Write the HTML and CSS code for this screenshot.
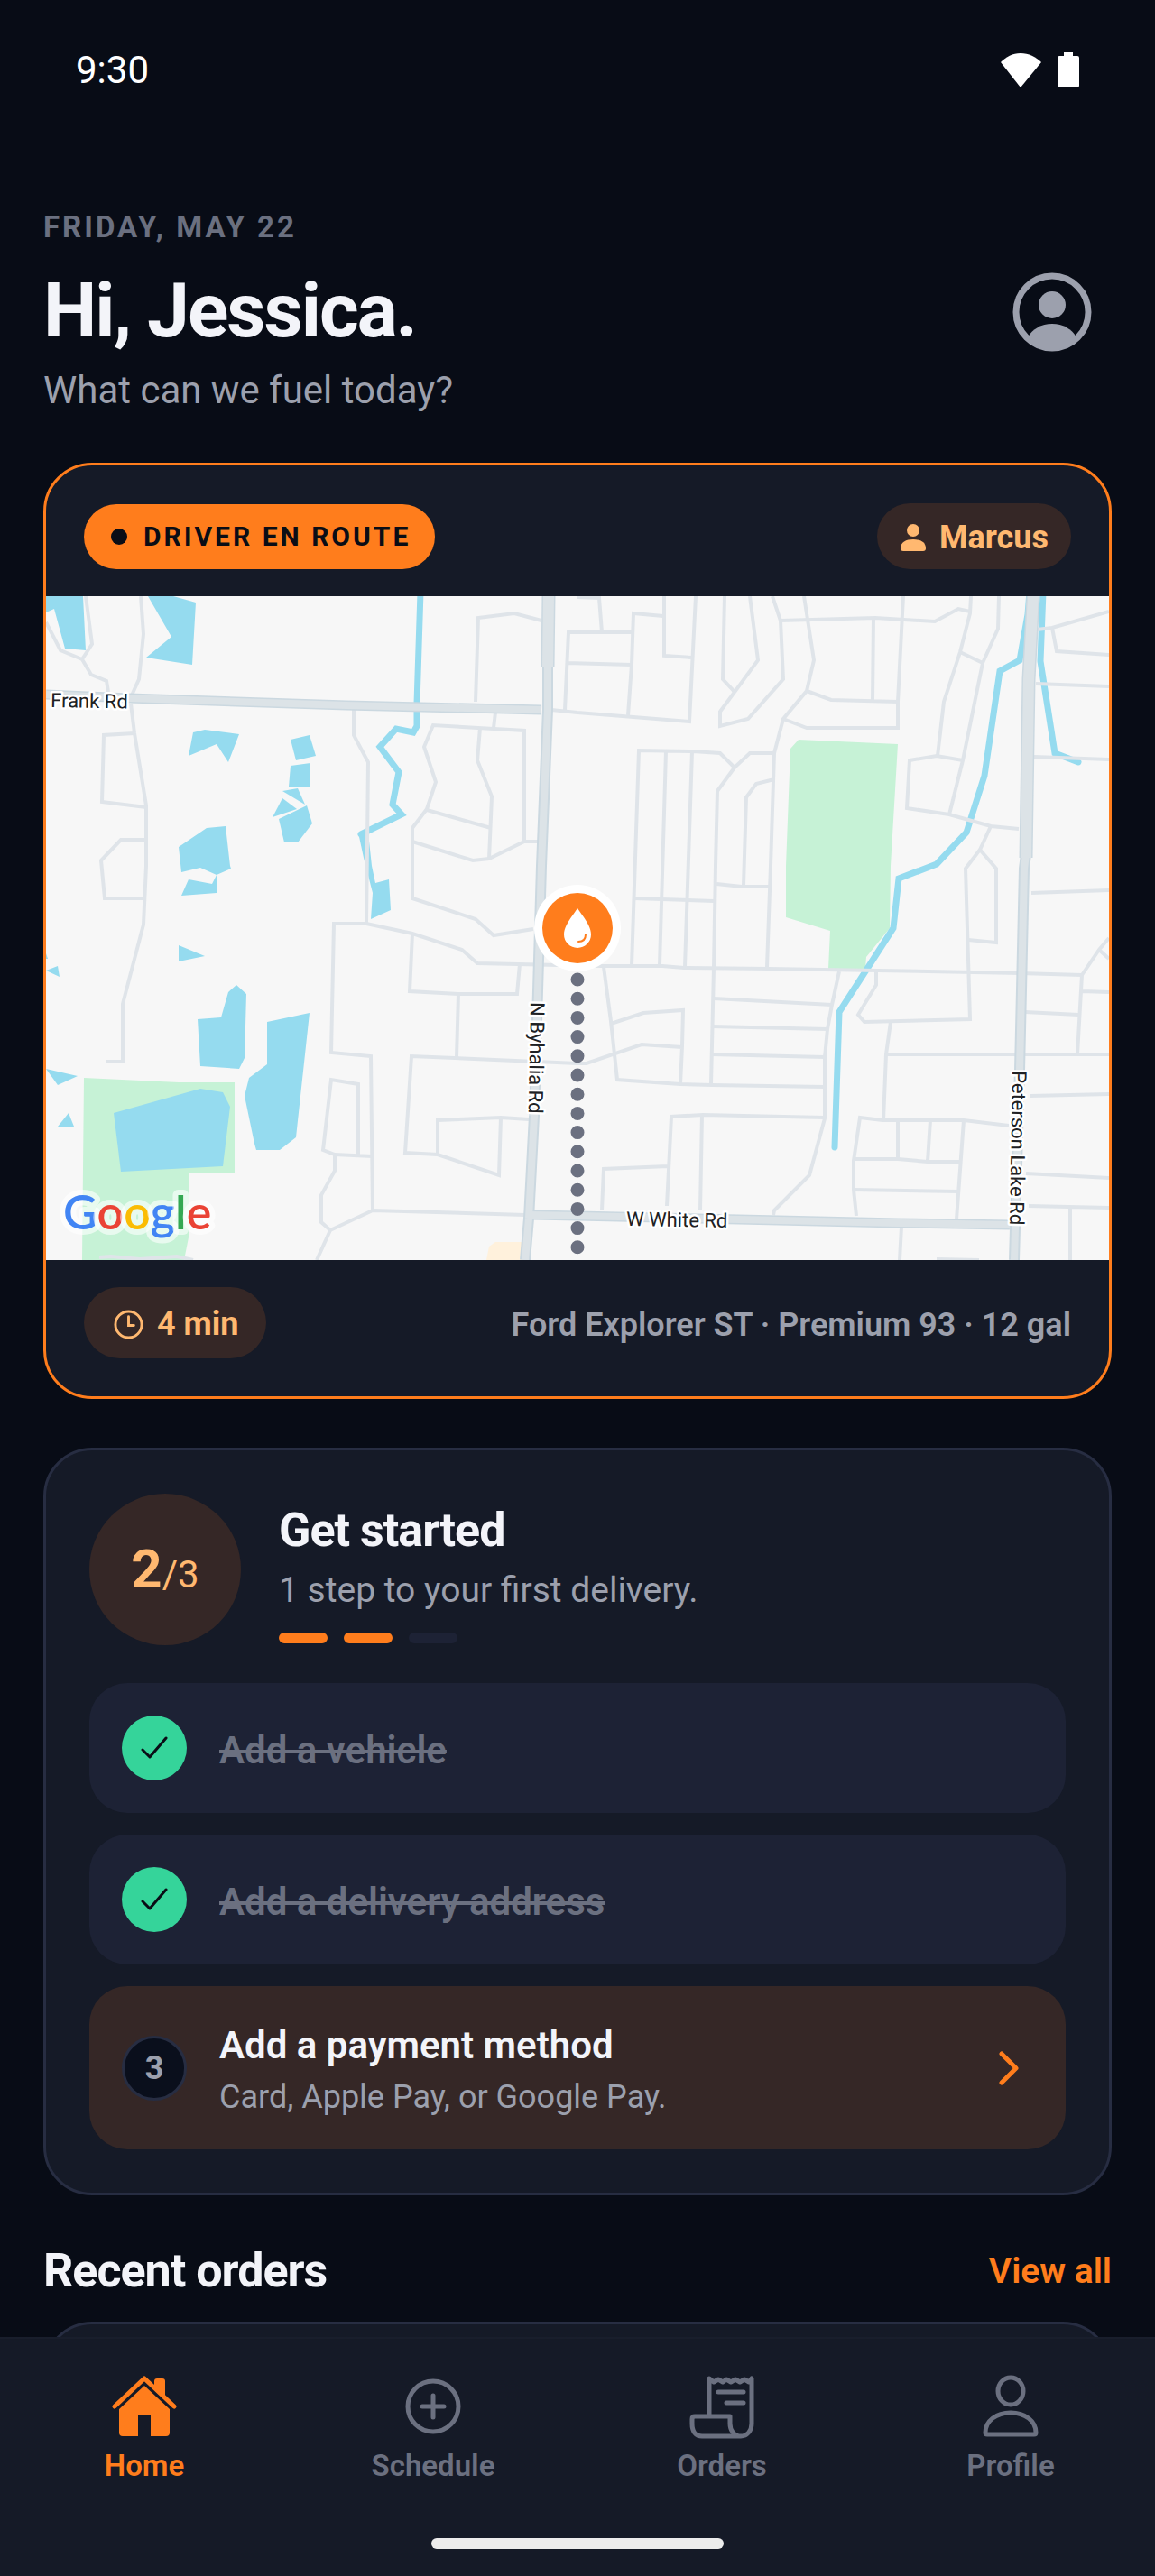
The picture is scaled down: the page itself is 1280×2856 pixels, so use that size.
FILE: index.html
```html
<!DOCTYPE html>
<html lang="en">
<head>
  <meta charset="UTF-8">
  <meta name="viewport" content="width=device-width, initial-scale=1">
  <title>Home</title>
  <link rel="stylesheet" href="styles.css">
</head>
<body>
  <div class="status-bar">
    <span>9:30</span>
    <div class="status-icons">
      <svg width="45" height="38" viewBox="0 0 45 38" fill="#fff"><path d="M22 38L0 10C6 4 13 0 22 0s17 4 23 10z"/></svg>
      <svg width="24" height="39" viewBox="0 0 24 39" fill="#fff"><path d="M7 4V0h10v4h5q2 0 2 2v31q0 2-2 2H2q-2 0-2-2V6q0-2 2-2z"/></svg>
    </div>
  </div>

  <main class="content">
    <header class="greeting">
      <div>
        <p class="date">FRIDAY, MAY 22</p>
        <h1>Hi, Jessica.</h1>
        <p class="subtitle">What can we fuel today?</p>
      </div>
      <button class="avatar" aria-label="Account">
        <svg width="88" height="88" viewBox="0 0 88 88">
          <defs><clipPath id="avatarClip"><circle cx="44" cy="44" r="42"/></clipPath></defs>
          <circle cx="44" cy="44" r="40" fill="none" stroke="#9ca0ad" stroke-width="7"/>
          <g fill="#9ca0ad" clip-path="url(#avatarClip)">
            <circle cx="44" cy="36" r="15"/>
            <path d="M17 72C22 63 32 57 44 57s22 6 27 15L62 88H26z"/>
          </g>
        </svg>
      </button>
    </header>

    <!-- Active delivery -->
    <section class="card delivery">
      <div class="delivery-top">
        <span class="badge"><span class="badge-dot"></span>DRIVER EN ROUTE</span>
        <span class="chip driver">
          <svg width="28" height="30" viewBox="0 0 28 30" fill="#ffb870"><circle cx="14" cy="7" r="7"/><path d="M0 27C0 20 6 17 14 17s14 3 14 10q0 3-3 3H3q-3 0-3-3z"/></svg>
          Marcus
        </span>
      </div>

      <svg class="map" viewBox="0 0 1178 736" role="img" aria-label="Driver location map">
        <rect width="1178" height="736" fill="#f7f7f7"/>
        <!-- parks -->
        <g fill="#c6f2d6">
          <path d="M42 534L147 539 209 539 209 640 158 640 159 706 153 736 40 736z"/>
          <path d="M834 159L944 164 936 299 935 368 909 400 908 413 867 413 869 371 820 356 820 299 825 169z"/>
        </g>
        <path d="M488 736L491 721 498 716 528 716 527 736z" fill="#fff1dc"/>
        <!-- water -->
        <g fill="#95dbef">
          <path d="M0 0H41L44 60 21 58 9 14 0 18z"/>
          <path d="M113 0H141L166 7 162 76 111 68 139 45z"/>
          <path d="M346 262L357 262 361 299 365 318 380 314 382 348 360 358 362 329 352 290z"/>
          <path d="M163 151L176 148 214 153 202 184 189 164 158 177z"/>
          <path d="M271 159L292 154 299 177 277 182z"/>
          <path d="M271 188L293 185 293 211 269 211z"/>
          <path d="M262 216L279 213 287 231z"/>
          <path d="M262 224L278 236 251 245z"/>
          <path d="M258 247L289 232 295 252 279 273 264 273z"/>
          <path d="M147 278L178 257 199 255 204 299 205 302 189 309 171 301 150 306z"/>
          <path d="M158 314L184 319 189 309 189 329 150 332z"/>
          <path d="M147 387L176 399 147 405z"/>
          <path d="M0 396L2 402H0z"/>
          <path d="M0 415L13 410 15 422z"/>
          <path d="M0 524L35 532 13 542z"/>
          <path d="M25 573L31 588H13z"/>
          <path d="M211 431L222 441 220 512 214 524 171 521 168 469 194 467 202 439z"/>
          <path d="M245 472L292 462 277 600 259 614 233 614 231 607 220 554 225 534 245 519z"/>
          <path d="M75 573L171 546 196 550 204 566 196 632 83 638z"/>
        </g>
        <g fill="none" stroke="#95dbef" stroke-width="7" stroke-linecap="round">
          <path d="M415 -5L411 119 411 144 407 151 388 147 370 167 391 195 384 231 394 242 349 264"/>
          <path d="M1090 -5L1088 20 1079 71 1057 83 1040 199 1020 262 987 297 945 313 939 368 879 461 874 611"/>
          <path d="M1105 -5L1102 72 1118 174 1144 184"/>
        </g>
        <!-- side streets -->
        <g fill="none" stroke="#dfe4e9" stroke-width="4">
          <path d="M0 29L16 60 40 70 50 87 67 94 69 106M40 70L51 53 44 0M105 0L108 42 103 92 94 112"/>
          <path d="M94 119L98 152 111 232 111 299 108 364 85 452 85 516 66 516"/>
          <path d="M98 152L64 154 62 228 111 234M111 270L83 270 61 293 65 335 108 335"/>
          <path d="M341 126L341 154 357 184 355 363M476 117L479 24 519 19 549 27M498 129L496 146"/>
          <path d="M530 272L530 149 429 143 419 167 432 206 422 236 406 257 406 335 476 358 496 376 540 369"/>
          <path d="M481 146L478 182 494 222 491 291M422 237L493 257M406 272L473 293 491 291 530 272 545 272"/>
          <path d="M355 363L319 363 316 506 360 510 362 681M355 363L406 374 461 392 478 407 613 410"/>
          <path d="M406 374L403 438 457 441 522 441 525 408M457 441L455 511"/>
          <path d="M589 518L405 510 398 617 434 619 502 642 504 578M434 619L434 581 504 578 535 580"/>
          <path d="M346 619L346 541 316 536 307 614 320 619 362 621"/>
          <path d="M320 619L320 637 305 664 305 694 315 703 362 681 531 686M315 703L300 736"/>
          <path d="M59 733L72 732 104 735 145 732 163 736"/>
          <path d="M589 1L613 2 616 40M575 126L579 40 649 40M577 74L649 76M560 126L589 129 713 139 720 0"/>
          <path d="M684 22L651 19 649 76 645 132M685 0L685 66 715 68M752 0L750 92 763 106"/>
          <path d="M780 0L789 71 747 128 747 144 778 136 817 92 814 27 805 0"/>
          <path d="M840 0L851 71 843 105 817 136 807 174 803 299 799 411"/>
          <path d="M814 27L919 24 985 28 1011 14 1024 17M950 0L944 117 944 146 843 146 817 136"/>
          <path d="M843 105L870 115 944 117M917 24L916 116"/>
          <path d="M1025 0L1024 19 1013 62 995 117 988 177M1056 0L1055 36 1038 74 1016 182 1001 242M1013 62L1038 74"/>
          <path d="M1016 182L987 177 957 182 954 235 1001 242 1047 255 1078 258"/>
          <path d="M1047 255L1035 281 1019 302 1024 469 907 472 900 464 920 431 920 415"/>
          <path d="M1035 281L1053 302 1053 384 1022 381"/>
          <path d="M1178 17L1115 35 1098 37M1115 35L1120 61 1178 65M1097 97L1178 100M1095 178L1178 181"/>
          <path d="M649 410L657 171 717 172 747 174 763 190 780 174 807 174M687 172L680 409M716 172L708 411"/>
          <path d="M763 190L744 216 742 299 740 412 737 541M807 203L787 208 776 223 773 321"/>
          <path d="M652 335L740 338M743 319L771 322 801 322"/>
          <path d="M613 410L683 410 707 412 801 413 922 415 1079 418 1148 420"/>
          <path d="M1148 420L1167 392 1178 379M1167 392L1178 402M1148 420L1143 508M1148 438L1178 439M1085 461L1144 464M931 508L1178 508"/>
          <path d="M936 472L931 508 928 581M879 416L871 453 866 480 863 511 863 579 846 642 807 681 806 686"/>
          <path d="M740 446L871 453M738 477L866 480M738 508L863 511"/>
          <path d="M618 411L626 471 633 536 703 541 738 542 863 544"/>
          <path d="M626 474L662 462 706 459 705 499 703 541M589 518L599 518 660 497 705 500"/>
          <path d="M863 578L728 575 693 577 688 676M727 575L725 681M689 632L618 635 616 681"/>
          <path d="M1067 587L1017 581 927 581 902 578 895 626 895 658 898 687"/>
          <path d="M944 581L944 624M980 581L977 627M895 624L944 624 977 627 1013 627M1017 581L1009 691M895 658L1011 660"/>
          <path d="M1092 329L1178 326M1091 554L1178 552M1086 640L1178 645M1089 676L1178 678M1135 678L1135 736M948 699L946 736M987 735L1034 736"/>
        </g>
        <!-- main roads: edge, then fill -->
        <g fill="none" stroke="#cbd8e0">
          <path stroke-width="11" d="M0 109L92 113 333 121 549 126M540 686L589 687 768 691 944 695 1068 697"/>
          <path stroke-width="15" d="M557 0L556 78M1094 0L1089 92 1086 290"/>
          <path stroke-width="12" d="M556 76L556 126 549 299 541 576 535 690 531 736M1086 286L1084 302 1079 526 1073 736"/>
        </g>
        <g fill="none" stroke="#dce3e7">
          <path stroke-width="8" d="M0 109L92 113 333 121 549 126M536 686L589 687 768 691 944 695 1068 697"/>
          <path stroke-width="12" d="M557 0L556 78M1094 0L1089 92 1086 290"/>
          <path stroke-width="8" d="M556 76L556 126 549 299 541 576 535 690 531 736M1086 286L1084 302 1079 526 1073 736"/>
        </g>
        <g class="street-names">
          <text transform="translate(5 123) rotate(1)">Frank Rd</text>
          <text transform="translate(643 698) rotate(1)">W White Rd</text>
          <text transform="translate(537 450) rotate(91)">N Byhalia Rd</text>
          <text transform="translate(1071 526) rotate(91)">Peterson Lake Rd</text>
        </g>
        <text class="google" x="19" y="702"><tspan fill="#4285f4">G</tspan><tspan fill="#ea4335">o</tspan><tspan fill="#fbbc04">o</tspan><tspan fill="#4285f4">g</tspan><tspan fill="#34a853">l</tspan><tspan fill="#ea4335">e</tspan></text>
        <!-- route and driver pin -->
        <path d="M589 425V740" stroke="#6b7080" stroke-width="15" stroke-linecap="round" stroke-dasharray="0 21.2"/>
        <circle cx="589" cy="368" r="48" fill="#fff"/>
        <circle cx="589" cy="368" r="39" fill="#ff7d1c"/>
        <path d="M589 346c6 9 15 19 15 29a15 15 0 0 1-30 0c0-10 9-20 15-29z" fill="#fff"/>
        <path d="M598 375q0 8-8 8" fill="none" stroke="#ff7d1c" stroke-width="2" stroke-linecap="round"/>
      </svg>

      <div class="delivery-bottom">
        <span class="chip eta">
          <svg width="33" height="33" viewBox="0 0 34 34" fill="none" stroke="#ffb870" stroke-width="3" stroke-linecap="round"><circle cx="17" cy="17" r="15"/><path d="M17 8v10h6"/></svg>
          4 min
        </span>
        <span class="order-info">Ford Explorer ST · Premium 93 · 12 gal</span>
      </div>
    </section>

    <!-- Onboarding checklist -->
    <section class="card setup">
      <div class="setup-head">
        <div class="counter"><b>2</b><span>/3</span></div>
        <div class="setup-body">
          <h2>Get started</h2>
          <p class="setup-text">1 step to your first delivery.</p>
          <div class="bars"><span class="bar on"></span><span class="bar on"></span><span class="bar"></span></div>
        </div>
      </div>
      <ul class="steps">
        <li class="step done">
          <span class="step-mark"><svg width="30" height="26" viewBox="0 0 30 26" fill="none" stroke="#0a0d16" stroke-width="3" stroke-linecap="round" stroke-linejoin="round"><path d="M2 15L10 23 28 2"/></svg></span>
          <span class="step-body"><span class="step-title">Add a vehicle</span></span>
        </li>
        <li class="step done">
          <span class="step-mark"><svg width="30" height="26" viewBox="0 0 30 26" fill="none" stroke="#0a0d16" stroke-width="3" stroke-linecap="round" stroke-linejoin="round"><path d="M2 15L10 23 28 2"/></svg></span>
          <span class="step-body"><span class="step-title">Add a delivery address</span></span>
        </li>
        <li>
          <button class="step next">
            <span class="step-mark">3</span>
            <span class="step-body">
              <span class="step-title">Add a payment method</span>
              <span class="step-note">Card, Apple Pay, or Google Pay.</span>
            </span>
            <svg class="chevron" width="24" height="38" viewBox="0 0 24 38" fill="none" stroke="#ff7d1c" stroke-width="5" stroke-linecap="round" stroke-linejoin="round"><path d="M4 3L20 19 4 35"/></svg>
          </button>
        </li>
      </ul>
    </section>

    <section class="recent">
      <div class="recent-head">
        <h2>Recent orders</h2>
        <a href="#orders">View all</a>
      </div>
      <div class="card order-card"></div>
    </section>
  </main>

  <nav class="tab-bar">
    <div class="tabs">
      <a class="tab active" href="#home">
        <svg width="72" height="72" viewBox="0 0 72 72" fill="currentColor">
          <path d="M3 36L36 5 69 36" fill="none" stroke="currentColor" stroke-width="5" stroke-linecap="round" stroke-linejoin="round"/>
          <path d="M47 16V8q0-3 3-3h6q3 0 3 3v19z"/>
          <path d="M36 13L64 39V65q0 4-4 4H43V45H29V69H12q-4 0-4-4V39z"/>
        </svg>
        Home
      </a>
      <a class="tab" href="#schedule">
        <svg width="72" height="72" viewBox="0 0 72 72" fill="none" stroke="currentColor" stroke-width="5" stroke-linecap="round"><circle cx="36" cy="36" r="28"/><path d="M36 24v24M24 36h24"/></svg>
        Schedule
      </a>
      <a class="tab" href="#orders">
        <svg width="72" height="72" viewBox="0 0 72 72" fill="none" stroke="currentColor" stroke-width="5" stroke-linecap="round" stroke-linejoin="round">
          <path d="M22 47V5l5 4 5-3 5 3 4-3 5 3 5-3 5 3 5-3 5 3 3-4v50c0 8-5 14-12 14s-12-6-12-14v-8H6c-2 0-3 1-3 3v5c0 9 4 14 11 14h43M32 20h28M41 32h19"/>
        </svg>
        Orders
      </a>
      <a class="tab" href="#profile">
        <svg width="72" height="72" viewBox="0 0 72 72" fill="none" stroke="currentColor" stroke-width="5" stroke-linejoin="round"><ellipse cx="36" cy="19" rx="14" ry="15"/><path d="M8 65C8 52 20 43 36 43s28 9 28 22q0 2-2 2H10q-2 0-2-2z"/></svg>
        Profile
      </a>
    </div>
    <div class="home-indicator"></div>
  </nav>
</body>
</html>
```

FILE: styles.css
```css
* {
  box-sizing: border-box;
}

body {
  margin: 0;
  height: 100vh;
  display: flex;
  flex-direction: column;
  overflow: hidden;
  background: #080c16;
  color: #f3f4f9;
  font-family: Roboto, "Liberation Sans", sans-serif;
  -webkit-font-smoothing: antialiased;
}

h1,
h2,
p,
ul {
  margin: 0;
  padding: 0;
}

ul {
  list-style: none;
}

button {
  border: 0;
  padding: 0;
  background: none;
  color: inherit;
  font: inherit;
  text-align: left;
  cursor: pointer;
}

a {
  text-decoration: none;
}

svg {
  display: block;
  flex-shrink: 0;
}

.status-bar {
  flex-shrink: 0;
  display: flex;
  justify-content: space-between;
  align-items: center;
  height: 155px;
  padding: 0 84px;
  color: #fff;
  font-size: 42px;
}

.status-icons {
  display: flex;
  align-items: center;
  gap: 18px;
}

.content {
  flex: 1;
  min-height: 0;
  overflow: hidden;
  padding: 73px 48px 0;
}

/* greeting */
.greeting {
  display: flex;
  justify-content: space-between;
  align-items: center;
  margin-bottom: 50px;
  padding-right: 22px;
}

.date {
  color: #6b7080;
  font-size: 33px;
  font-weight: 700;
  line-height: 48px;
  letter-spacing: 3px;
}

.greeting h1 {
  margin-top: 13px;
  font-size: 84px;
  line-height: 112px;
  letter-spacing: -2px;
}

.subtitle {
  margin-top: 2px;
  color: #9ca0ad;
  font-size: 42px;
  line-height: 60px;
}

/* cards */
.card {
  border: 3px solid #272d42;
  border-radius: 54px;
  background: #151a27;
  overflow: hidden;
}

.delivery {
  border-color: #ff7d1c;
}

.delivery-top,
.delivery-bottom {
  display: flex;
  justify-content: space-between;
  align-items: center;
  padding: 42px 42px 30px;
}

.delivery-bottom {
  padding: 30px 42px 42px;
}

.badge {
  display: flex;
  align-items: center;
  gap: 18px;
  height: 72px;
  padding: 0 27px 0 30px;
  border-radius: 36px;
  background: #ff7d1c;
  color: #0a0d16;
  font-size: 30px;
  font-weight: 700;
  letter-spacing: 3px;
}

.badge-dot {
  width: 18px;
  height: 18px;
  border-radius: 50%;
  background: #0a0d16;
}

.chip {
  display: flex;
  align-items: center;
  gap: 15px;
  padding-top: 3px;
  border-radius: 40px;
  background: #352726;
  color: #ffb870;
  font-size: 36px;
  font-weight: 700;
}

.driver {
  height: 73px;
  padding-right: 25px;
  padding-left: 26px;
}

.eta {
  height: 79px;
  padding-right: 30px;
  padding-left: 33px;
}

.map {
  width: 100%;
  aspect-ratio: 1178 / 736;
}

.street-names {
  fill: #202124;
  font-size: 22px;
  stroke: #fff;
  stroke-width: 5px;
  stroke-linejoin: round;
  paint-order: stroke;
}

.google {
  font-family: Lato, sans-serif;
  font-size: 52px;
  font-weight: 600;
  stroke: rgba(255, 255, 255, 0.6);
  stroke-width: 12px;
  stroke-linejoin: round;
  paint-order: stroke;
}

.order-info {
  padding-top: 4px;
  color: #9ca0ad;
  font-size: 36px;
  font-weight: 600;
}

/* checklist */
.setup {
  margin-top: 54px;
  padding: 48px;
}

.setup-head {
  display: flex;
  align-items: center;
  gap: 42px;
}

.setup-body {
  padding-top: 5px;
}

.counter {
  display: flex;
  justify-content: center;
  align-items: baseline;
  width: 168px;
  height: 168px;
  border-radius: 50%;
  background: #352726;
  color: #ffb870;
  font-size: 42px;
  line-height: 168px;
}

.counter b {
  font-size: 60px;
}

h2 {
  font-size: 52px;
  line-height: 66px;
  letter-spacing: -1px;
}

.setup-text {
  margin-top: 6px;
  color: #9ca0ad;
  font-size: 39px;
  line-height: 54px;
}

.bars {
  display: flex;
  gap: 18px;
  margin-top: 20px;
}

.bar {
  width: 54px;
  height: 12px;
  border-radius: 6px;
  background: #1d2235;
}

.bar.on {
  background: #ff7d1c;
}

.steps {
  display: flex;
  flex-direction: column;
  gap: 24px;
  margin-top: 42px;
}

.step {
  display: flex;
  align-items: center;
  gap: 36px;
  width: 100%;
  min-height: 144px;
  padding: 34px 36px;
  border-radius: 42px;
  background: #1d2235;
}

.step-mark {
  display: flex;
  justify-content: center;
  align-items: center;
  flex-shrink: 0;
  width: 72px;
  height: 72px;
  border-radius: 50%;
  background: #35d49a;
}

.step-body {
  flex: 1;
  display: flex;
  flex-direction: column;
  gap: 6px;
  padding-top: 5px;
}

.step-title {
  font-size: 42px;
  font-weight: 600;
  line-height: 54px;
}

.done .step-title {
  color: #6b7080;
  text-decoration: line-through;
}

.next {
  min-height: 181px;
  background: #352726;
}

.next .step-mark {
  border: 3px solid #272d42;
  background: #0a0f1c;
  color: #9ca0ad;
  font-size: 36px;
  font-weight: 700;
}

.step-note {
  color: #9ca0ad;
  font-size: 36px;
  line-height: 48px;
}

.chevron {
  margin-right: 15px;
}

/* recent orders */
.recent {
  margin-top: 48px;
}

.recent-head {
  display: flex;
  justify-content: space-between;
  align-items: center;
  height: 72px;
  margin-bottom: 20px;
}

.recent-head a {
  color: #ff7d1c;
  font-size: 39px;
  font-weight: 600;
}

.order-card {
  height: 240px;
}

/* bottom navigation */
.tab-bar {
  flex-shrink: 0;
  border-top: 2px solid #191e2c;
  background: #151a27;
}

.tabs {
  display: grid;
  grid-template-columns: repeat(4, 1fr);
  padding-top: 39px;
}

.tab {
  display: flex;
  flex-direction: column;
  align-items: center;
  gap: 6px;
  color: #6b7080;
  font-size: 33px;
  font-weight: 600;
  line-height: 48px;
}

.tab.active {
  color: #ff7d1c;
}

.home-indicator {
  width: 324px;
  height: 12px;
  margin: 56px auto 30px;
  border-radius: 6px;
  background: #ececec;
}
```
